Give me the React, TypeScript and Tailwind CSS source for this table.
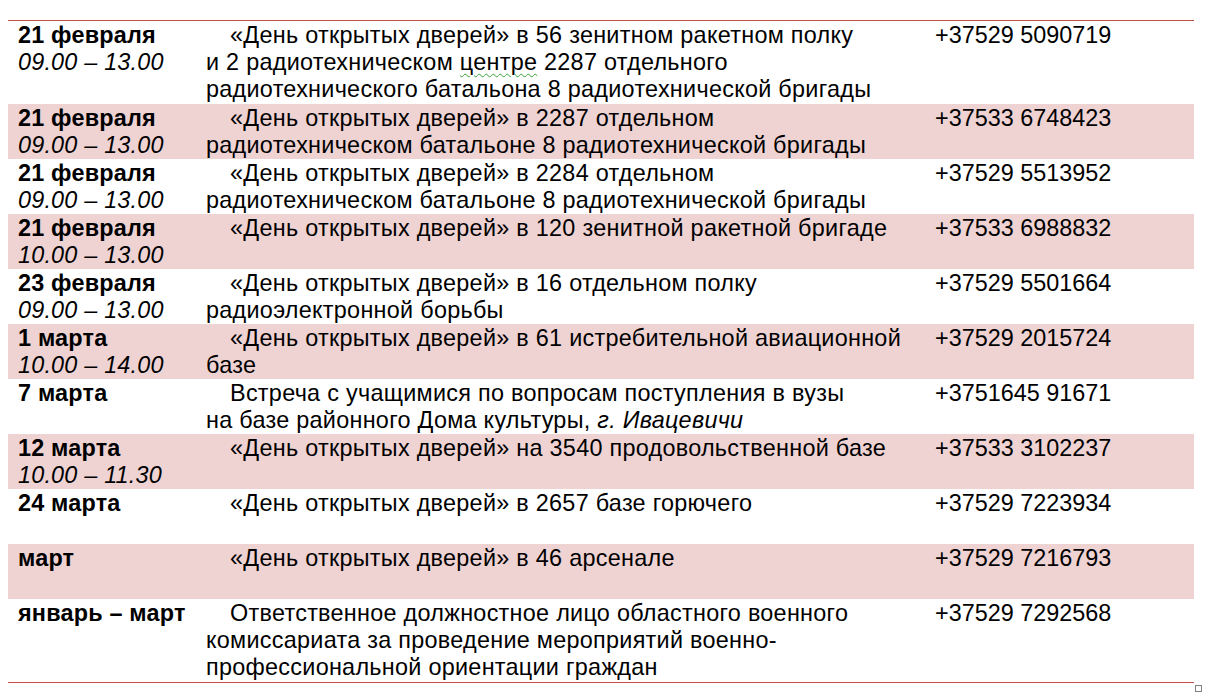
import React from 'react';

type Row = {
  date: string;
  time?: string;
  lines: React.ReactNode[];
  phone: string;
  pink?: boolean;
  extraLine?: boolean;
};

const rows: Row[] = [
  {
    date: '21 февраля',
    time: '09.00 – 13.00',
    lines: [
      '«День открытых дверей» в 56 зенитном ракетном полку',
      <>
        и 2 радиотехническом{' '}
        <span className="underline decoration-wavy decoration-[#3aa63a] decoration-[1px] underline-offset-[3px]">центре</span>{' '}
        2287 отдельного
      </>,
      'радиотехнического батальона 8 радиотехнической бригады',
    ],
    phone: '+37529 5090719',
  },
  {
    date: '21 февраля',
    time: '09.00 – 13.00',
    lines: ['«День открытых дверей» в 2287 отдельном', 'радиотехническом батальоне 8 радиотехнической бригады'],
    phone: '+37533 6748423',
    pink: true,
  },
  {
    date: '21 февраля',
    time: '09.00 – 13.00',
    lines: ['«День открытых дверей» в 2284 отдельном', 'радиотехническом батальоне 8 радиотехнической бригады'],
    phone: '+37529 5513952',
  },
  {
    date: '21 февраля',
    time: '10.00 – 13.00',
    lines: ['«День открытых дверей» в 120 зенитной ракетной бригаде'],
    phone: '+37533 6988832',
    pink: true,
  },
  {
    date: '23 февраля',
    time: '09.00 – 13.00',
    lines: ['«День открытых дверей» в 16 отдельном полку', 'радиоэлектронной борьбы'],
    phone: '+37529 5501664',
  },
  {
    date: '1 марта',
    time: '10.00 – 14.00',
    lines: ['«День открытых дверей» в 61 истребительной авиационной', 'базе'],
    phone: '+37529 2015724',
    pink: true,
  },
  {
    date: '7 марта',
    lines: [
      'Встреча с учащимися по вопросам поступления в вузы',
      <>
        на базе районного Дома культуры, <i>г. Ивацевичи</i>
      </>,
    ],
    phone: '+3751645 91671',
  },
  {
    date: '12 марта',
    time: '10.00 – 11.30',
    lines: ['«День открытых дверей» на 3540 продовольственной базе'],
    phone: '+37533 3102237',
    pink: true,
  },
  {
    date: '24 марта',
    lines: ['«День открытых дверей» в 2657 базе горючего'],
    phone: '+37529 7223934',
    extraLine: true,
  },
  {
    date: 'март',
    lines: ['«День открытых дверей» в 46 арсенале'],
    phone: '+37529 7216793',
    pink: true,
    extraLine: true,
  },
  {
    date: 'январь – март',
    lines: [
      'Ответственное должностное лицо областного военного',
      'комиссариата за проведение мероприятий военно-',
      'профессиональной ориентации граждан',
    ],
    phone: '+37529 7292568',
  },
];

const TableRow = ({ row }: { row: Row }) => {
  const three = row.lines.length > 2;
  return (
    <div
      className={`grid grid-cols-[198px_729px_1fr] pt-[1px] ${three ? 'pb-[1px]' : ''} ${
        row.pink ? 'bg-[#efd3d3]' : ''
      }`}
    >
      <div className="pl-[10px] whitespace-nowrap tracking-[0.2px]">
        <div className="font-bold">{row.date}</div>
        {row.time && <div className="italic">{row.time}</div>}
        {row.extraLine && <div>&nbsp;</div>}
      </div>
      <div className="whitespace-nowrap tracking-[0.28px]">
        {row.lines.map((line, i) => (
          <div key={i} className={i === 0 ? 'pl-[24px]' : ''}>
            {line}
          </div>
        ))}
      </div>
      <div className="whitespace-nowrap">{row.phone}</div>
    </div>
  );
};

export default function App() {
  return (
    <div
      className="min-h-screen bg-white pt-[20px] text-black text-[23.4px] leading-[27px]"
      style={{ fontFamily: '"Liberation Sans", Arial, sans-serif' }}
    >
      <div className="ml-[8px] w-[1186px] border-t border-b border-[#c0504d]">
        {rows.map((row, i) => (
          <TableRow key={i} row={row} />
        ))}
      </div>
      <div className="ml-[1195px] mt-[2px] w-[7px] h-[7px] border border-[#808080]" />
    </div>
  );
}
